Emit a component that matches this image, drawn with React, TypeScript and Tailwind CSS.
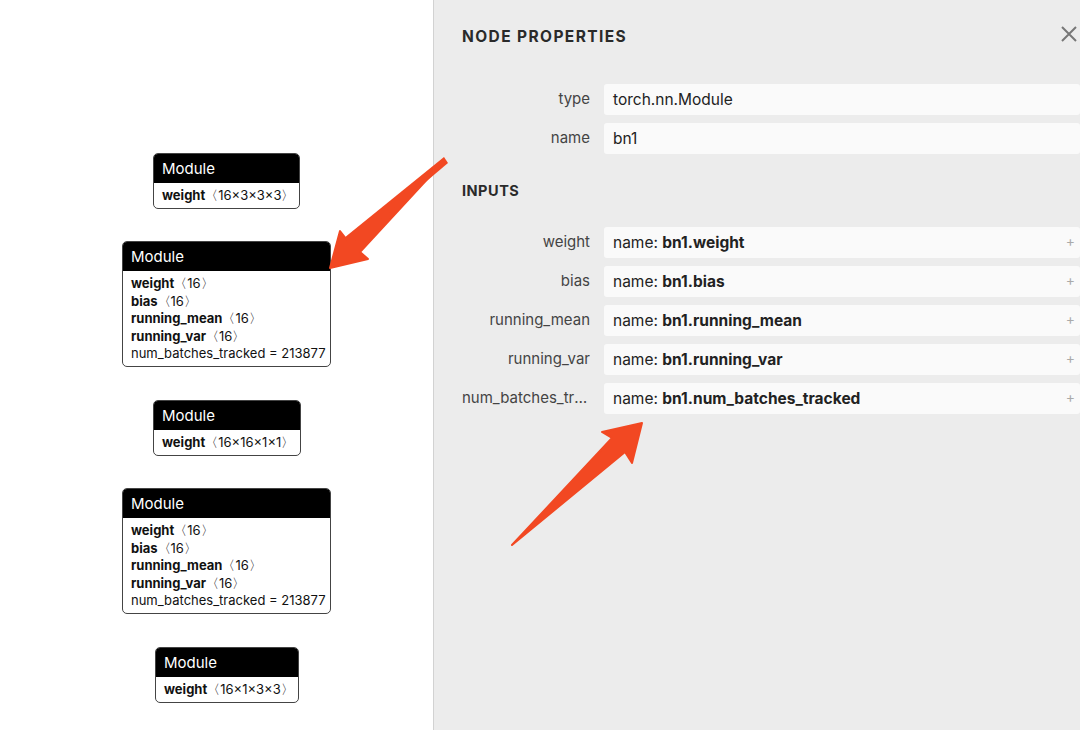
const font = { fontFamily: "Inter, 'Liberation Sans', sans-serif" };

type Attr = { name: string; shape?: string; value?: string };

type NodeProps = {
  left: number;
  top: number;
  width: number;
  attrs: Attr[];
};

const GraphNode = ({ left, top, width, attrs }: NodeProps) => (
  <div
    className="absolute rounded-[5px] border border-[#444] bg-white overflow-hidden"
    style={{ left, top, width }}
  >
    <div className="h-[29px] bg-black text-white text-[15px] leading-[29px] pl-[8px]">
      Module
    </div>
    <div className="px-[8px] pt-[4px] pb-[3px] text-[13px] leading-[17.6px] text-[#111] whitespace-nowrap">
      {attrs.map((a) =>
        a.value ? (
          <div key={a.name}>
            {a.name} = {a.value}
          </div>
        ) : (
          <div key={a.name}>
            <span className="font-bold">{a.name}</span>
            <span>〈{a.shape}〉</span>
          </div>
        )
      )}
    </div>
  </div>
);

const bnAttrs: Attr[] = [
  { name: "weight", shape: "16" },
  { name: "bias", shape: "16" },
  { name: "running_mean", shape: "16" },
  { name: "running_var", shape: "16" },
  { name: "num_batches_tracked", value: "213877" },
];

const PropRow = ({ label, children, plus }: { label: string; children: React.ReactNode; plus?: boolean }) => (
  <div className="flex items-center h-[31px] mb-[8px]">
    <div className="w-[128px] shrink-0 text-right text-[15px] text-[#444] truncate">{label}</div>
    <div className="ml-[14px] flex-1 h-full rounded-[3px] bg-[#fafafa] flex items-center pl-[9px] pr-[4px] text-[15.5px] text-[#222]">
      <div className="flex-1 whitespace-nowrap">{children}</div>
      {plus && <span className="text-[#aaa] text-[14px] leading-none mr-[1px] mt-[-3px]">+</span>}
    </div>
  </div>
);

export default function App() {
  return (
    <div className="relative w-[1080px] h-[730px] overflow-hidden flex bg-white" style={font}>
      <div className="relative w-[433px] h-full bg-white">
        <GraphNode left={153} top={153} width={147} attrs={[{ name: "weight", shape: "16×3×3×3" }]} />
        <GraphNode left={122} top={241} width={209} attrs={bnAttrs} />
        <GraphNode left={153} top={400} width={148} attrs={[{ name: "weight", shape: "16×16×1×1" }]} />
        <GraphNode left={122} top={488} width={209} attrs={bnAttrs} />
        <GraphNode left={155} top={647} width={144} attrs={[{ name: "weight", shape: "16×1×3×3" }]} />
      </div>
      <div className="flex-1 h-full bg-[#ececec] border-l border-[#d2d2d2] pl-[28px] pt-[27px]">
        <div className="flex items-center justify-between h-[20px]">
          <div className="text-[15.5px] font-bold tracking-[1.4px] text-[#2a2a2a]">NODE PROPERTIES</div>
          <svg width="18" height="18" viewBox="0 0 18 18" className="mr-[2px] mt-[-6px]">
            <path d="M2 2 L16 16 M16 2 L2 16" stroke="#777" strokeWidth="2" />
          </svg>
        </div>
        <div className="mt-[37px]">
          <PropRow label="type">torch.nn.Module</PropRow>
          <PropRow label="name">bn1</PropRow>
        </div>
        <div className="mt-[26px] text-[14.5px] font-bold tracking-[0.5px] text-[#2a2a2a]">INPUTS</div>
        <div className="mt-[25px]">
          {["weight", "bias", "running_mean", "running_var", "num_batches_tracked"].map((n) => (
            <PropRow key={n} label={n} plus>
              name: <span className="font-bold">bn1.{n}</span>
            </PropRow>
          ))}
        </div>
      </div>
      <svg className="absolute inset-0 pointer-events-none" width="1080" height="730">
        <path
          d="M444 161 L347 240 L340 231 L330 268 L368 259 L360 252 Z"
          fill="#f24822"
          stroke="#f24822"
          strokeWidth="2"
          strokeLinejoin="round"
        />
        <path d="M444 157 L448 163 L350 246 L344 238 Z" fill="#f24822" />
        <path
          d="M512 545 L612 438 L602 432 L642 423 L632 463 L625 452 Z"
          fill="#f24822"
          stroke="#f24822"
          strokeWidth="2"
          strokeLinejoin="round"
        />
      </svg>
    </div>
  );
}
